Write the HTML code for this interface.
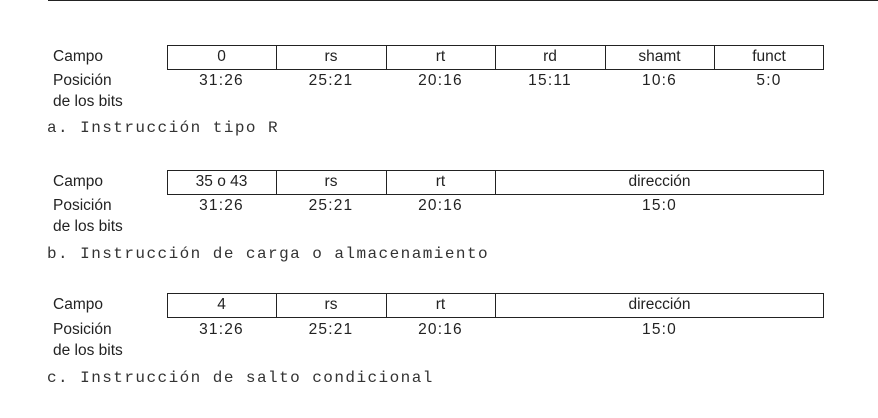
<!DOCTYPE html>
<html><head><meta charset="utf-8"><style>
body{margin:0;width:878px;height:418px;background:#fff;position:relative;overflow:hidden;font-family:"Liberation Sans",sans-serif;color:#222;}
.hr{position:absolute;left:48px;right:0;top:0;height:1px;background:#222;}
.t{position:absolute;font-size:15.5px;line-height:16px;white-space:nowrap;}
.c{position:absolute;font-size:15.5px;line-height:16px;text-align:center;}
.n{letter-spacing:1.2px;}
.box{position:absolute;left:167px;width:657px;height:25px;border:1px solid #222;box-sizing:border-box;}
.d{position:absolute;top:0;bottom:0;width:1px;background:#222;}
.cap{position:absolute;left:47px;font-family:"Liberation Mono",monospace;font-size:16px;letter-spacing:1.45px;color:#333;white-space:nowrap;line-height:16px;}
</style></head><body>
<div class="hr"></div>

<!-- a -->
<div class="t" style="left:53px;top:49px">Campo</div>
<div class="box" style="top:45px">
<div class="d" style="left:108px"></div><div class="d" style="left:218px"></div><div class="d" style="left:327px"></div><div class="d" style="left:437px"></div><div class="d" style="left:546px"></div></div>
<div class="c" style="left:167px;width:109px;top:49px">0</div>
<div class="c" style="left:276px;width:110px;top:49px">rs</div>
<div class="c" style="left:386px;width:109px;top:49px">rt</div>
<div class="c" style="left:495px;width:110px;top:49px">rd</div>
<div class="c" style="left:605px;width:109px;top:49px">shamt</div>
<div class="c" style="left:714px;width:110px;top:49px">funct</div>
<div class="t" style="left:53px;top:73px">Posición</div>
<div class="t" style="left:53px;top:94px">de los bits</div>
<div class="c n" style="left:167px;width:109px;top:73px">31:26</div>
<div class="c n" style="left:276px;width:110px;top:73px">25:21</div>
<div class="c n" style="left:386px;width:109px;top:73px">20:16</div>
<div class="c n" style="left:495px;width:110px;top:73px">15:11</div>
<div class="c n" style="left:605px;width:109px;top:73px">10:6</div>
<div class="c n" style="left:714px;width:110px;top:73px">5:0</div>
<div class="cap" style="top:120px">a. Instrucción tipo R</div>

<!-- b -->
<div class="t" style="left:53px;top:174px">Campo</div>
<div class="box" style="top:170px">
<div class="d" style="left:108px"></div><div class="d" style="left:218px"></div><div class="d" style="left:327px"></div></div>
<div class="c" style="left:167px;width:109px;top:174px">35 o 43</div>
<div class="c" style="left:276px;width:110px;top:174px">rs</div>
<div class="c" style="left:386px;width:109px;top:174px">rt</div>
<div class="c" style="left:495px;width:329px;top:174px">dirección</div>
<div class="t" style="left:53px;top:198px">Posición</div>
<div class="t" style="left:53px;top:219px">de los bits</div>
<div class="c n" style="left:167px;width:109px;top:198px">31:26</div>
<div class="c n" style="left:276px;width:110px;top:198px">25:21</div>
<div class="c n" style="left:386px;width:109px;top:198px">20:16</div>
<div class="c n" style="left:495px;width:329px;top:198px">15:0</div>
<div class="cap" style="top:246px">b. Instrucción de carga o almacenamiento</div>

<!-- c -->
<div class="t" style="left:53px;top:297px">Campo</div>
<div class="box" style="top:293px">
<div class="d" style="left:108px"></div><div class="d" style="left:218px"></div><div class="d" style="left:327px"></div></div>
<div class="c" style="left:167px;width:109px;top:297px">4</div>
<div class="c" style="left:276px;width:110px;top:297px">rs</div>
<div class="c" style="left:386px;width:109px;top:297px">rt</div>
<div class="c" style="left:495px;width:329px;top:297px">dirección</div>
<div class="t" style="left:53px;top:322px">Posición</div>
<div class="t" style="left:53px;top:343px">de los bits</div>
<div class="c n" style="left:167px;width:109px;top:322px">31:26</div>
<div class="c n" style="left:276px;width:110px;top:322px">25:21</div>
<div class="c n" style="left:386px;width:109px;top:322px">20:16</div>
<div class="c n" style="left:495px;width:329px;top:322px">15:0</div>
<div class="cap" style="top:370px">c. Instrucción de salto condicional</div>
</body></html>
